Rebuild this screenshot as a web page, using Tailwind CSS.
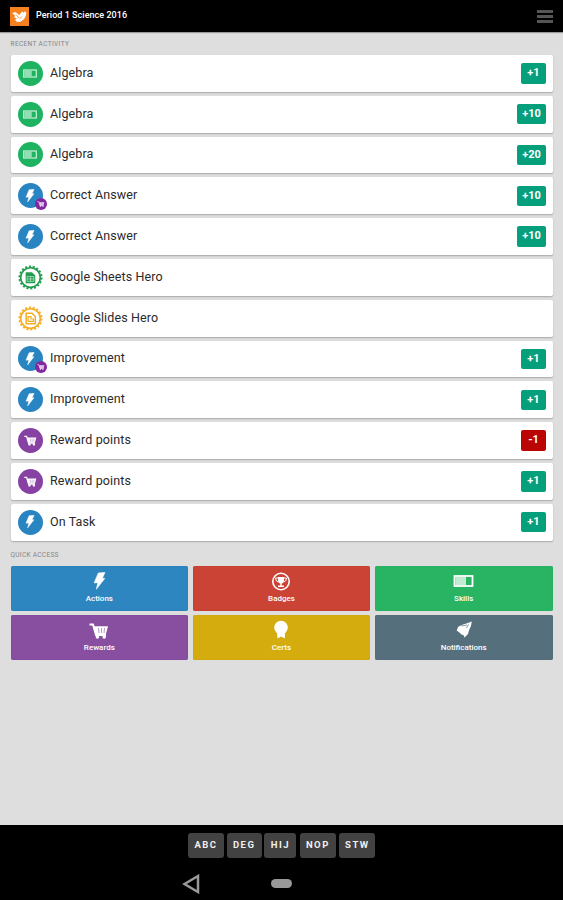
<!DOCTYPE html>
<html lang="en">
<head>
<meta charset="utf-8">
<title>Period 1 Science 2016</title>
<script src="https://cdn.jsdelivr.net/npm/@tailwindcss/browser@4"></script>
</head>
<body class="w-[563px] h-[900px] overflow-hidden bg-[#dedede] font-['Roboto',sans-serif] text-[#2a2a2a]">
<svg class="hidden">
  <symbol id="bolt" viewBox="0 0 12 18"><path fill="currentColor" stroke="currentColor" stroke-width=".6" d="M4.800 1 11.500.4 8.800 6.200 11.300 6.400 2.800 17.300 4.400 10.700.600 10.900Z"/></symbol>
  <symbol id="cart" viewBox="0 0 20 16"><path fill="none" stroke="currentColor" stroke-width="2" d="M.5 1.500H4L7 12h10"/><path fill="currentColor" d="M5 3.200h14L16.800 11.500H7.200Z"/><path stroke="#8a4a9f" stroke-width=".6" d="M9.500 5l.5 5M12.500 5v5M15.500 5l-.5 5"/><circle cx="8.400" cy="14" r="1.800" fill="currentColor"/><circle cx="15.200" cy="14" r="1.800" fill="currentColor"/></symbol>
  <symbol id="meter" viewBox="0 0 20 12"><rect x="1" y="1" width="18" height="10" fill="none" stroke="currentColor" stroke-width="1.800"/><rect x="2" y="2" width="10.500" height="8" fill="currentColor" opacity=".72"/></symbol>
  <symbol id="seal" viewBox="0 0 26 26"><circle cx="13" cy="13" r="10.200" fill="none" stroke="currentColor" stroke-width="1.700"/><circle cx="13" cy="13" r="11.600" fill="none" stroke="currentColor" stroke-width="1.800" stroke-dasharray="2.200 1.844"/></symbol>
</svg>
<div class="flex flex-col h-full">
  <header class="h-[32px] shrink-0 bg-black flex items-center pl-[10px] pr-[10px] shadow-[0_1px_1px_#999]">
    <svg class="w-[19px] h-[19px]" viewBox="0 0 19 19"><rect width="19" height="19" fill="#f5821f"/><path fill="#fff" d="M2.500 6.500Q3.500 4.500 6 5.500L9.300 8 12 4.500 13.500 5.700 15 4.300 16.500 6.300 15.500 9.500Q14.500 12.500 12 13.700 9 15.800 6.300 14.500L5 12.800 7 11.500 4 10.300 5.300 8.800Z"/><path stroke="#f5821f" stroke-width=".8" fill="none" d="M6 7.500 8.800 11M9.500 12l2.500-2.500"/></svg>
    <h1 class="ml-[7px] -mt-[2px] text-[9px] leading-[12px] font-medium text-white whitespace-nowrap tracking-[0.04px]">Period 1 Science 2016</h1>
    <div class="ml-auto flex flex-col gap-[2px] w-[16px] mr-[0.5px]"><i class="h-[3px] bg-[#555]"></i><i class="h-[3px] bg-[#555]"></i><i class="h-[3px] bg-[#555]"></i></div>
  </header>
  <main class="flex-1 px-[10.5px]">
    <h2 class="h-[23px] pt-[7px] text-[6.500px] leading-[10px] text-[#858585] tracking-[0.370px]">RECENT ACTIVITY</h2>
    <ul id="activity" class="flex flex-col gap-[4px]"></ul>
    <h2 class="h-[25.500px] pt-[9px] text-[6.500px] leading-[10px] text-[#858585] tracking-[0.320px]">QUICK ACCESS</h2>
    <div class="grid grid-cols-3 gap-[4.500px] text-white text-[8px] leading-[10px] font-medium text-center">
      <div class="h-[44.500px] rounded-[2px] bg-[#2e86c1] flex flex-col items-center shadow-[inset_0_0_1px_#1b6ca5]"><svg class="mt-[6px] w-[13px] h-[18px]"><use href="#bolt"/></svg><span class="mt-[3.500px]">Actions</span></div>
      <div class="h-[44.500px] rounded-[2px] bg-[#cb4335] flex flex-col items-center shadow-[inset_0_0_1px_#a82018]"><svg class="mt-[5.500px] w-[20px] h-[19px]" viewBox="0 0 20 19"><circle cx="10" cy="9.500" r="8.200" fill="none" stroke="#fff" stroke-width="1.600"/><path fill="#fff" d="M7 5h6v4q-.5 2.200-2.300 2.800v1.700H13V15H7v-1.500h2.300v-1.700Q7.500 11.200 7 9Z"/><path fill="none" stroke="#fff" d="M7 6H4.500q0 3.500 3 4M13 6h2.500q0 3.500-3 4"/></svg><span class="mt-[3px]">Badges</span></div>
      <div class="h-[44.500px] rounded-[2px] bg-[#28b463] flex flex-col items-center shadow-[inset_0_0_1px_#10944a]"><svg class="mt-[9px] w-[21px] h-[12px]"><use href="#meter"/></svg><span class="mt-[6.500px]">Skills</span></div>
      <div class="h-[44.500px] rounded-[2px] bg-[#884ea0] flex flex-col items-center shadow-[inset_0_0_1px_#6b2d88]"><svg class="mt-[8px] w-[20px] h-[16px]"><use href="#cart"/></svg><span class="mt-[3.500px]">Rewards</span></div>
      <div class="h-[44.500px] rounded-[2px] bg-[#d4ac0d] flex flex-col items-center shadow-[inset_0_0_1px_#b98e00]"><svg class="mt-[5px] w-[16px] h-[19px]" viewBox="0 0 16 19"><circle cx="8" cy="7.500" r="6.800" fill="#fff"/><path fill="#fff" d="M4 12h8l-.2 6.500L8 16.500 4.500 18.500Z"/></svg><span class="mt-[3.500px]">Certs</span></div>
      <div class="h-[44.500px] rounded-[2px] bg-[#566f7c] flex flex-col items-center shadow-[inset_0_0_1px_#3c5664]"><svg class="mt-[6px] w-[16px] h-[17px]" viewBox="0 0 16 17"><path fill="#fff" d="M15.800.5Q15.500 5 13.300 8.500L12 13 8.500 16.500 7.400 14Q5 14 4 12L.7 9.500 2.200 5.800 7 3.500Q11 2.500 15.800.5Z"/><path fill="none" stroke="#566f7c" stroke-width=".7" d="M5.500 5 11 4M12.500 3.500 10.500 7"/></svg><span class="mt-[4.500px]">Notifications</span></div>
    </div>
  </main>
  <footer class="h-[75px] shrink-0 bg-black flex flex-col">
    <div class="flex gap-[2.700px] pl-[188px] pt-[7.500px] text-[9.500px] font-bold text-[#f0f0f0] leading-[24px] text-center tracking-[1.500px]">
      <span class="w-[36px] h-[25.500px] bg-[#424242] rounded-[3px]">ABC</span>
      <span class="w-[35px] h-[25.500px] bg-[#424242] rounded-[3px]">DEG</span>
      <span class="w-[32px] h-[25.500px] bg-[#424242] rounded-[3px]">HIJ</span>
      <span class="w-[36px] h-[25.500px] bg-[#424242] rounded-[3px] ml-[0.800px]">NOP</span>
      <span class="w-[36px] h-[25.500px] bg-[#424242] rounded-[3px] ml-[0.800px]">STW</span>
    </div>
    <div class="flex items-center pl-[181.500px] mt-[15.500px]">
      <svg class="w-[18px] h-[20px]" viewBox="0 0 18 20"><path fill="none" stroke="#999" stroke-width="2.500" d="M2.500 10 16 2v16Z"/></svg>
      <i class="ml-[71px] w-[21.500px] h-[9px] rounded-full bg-[#999]"></i>
    </div>
  </footer>
</div>
<script>
const circle = (color, inner) => `<div class="relative w-[25px] h-[25px] rounded-full flex items-center justify-center text-white ${color}">${inner}</div>`;
const bolt = '<svg class="w-[10px] h-[13.500px]"><use href="#bolt"/></svg>';
const extra = '<span class="absolute left-[17px] top-[15px] w-[12px] h-[12px] rounded-full bg-[#8327a0] flex items-center justify-center text-[#efd8f5]"><svg class="w-[8px] h-[6px]"><use href="#cart"/></svg></span>';
const seal = (color, doc) => `<div class="relative w-[25px] h-[25px] ${color}"><svg viewBox="0 0 26 26" class="w-full h-full"><use href="#seal"/>${doc}</svg></div>`;
const icons = {
  skill: circle('bg-[#1db360]', '<svg class="w-[14px] h-[9px] text-[#bff0d2]"><use href="#meter"/></svg>'),
  action: circle('bg-[#2985c2]', bolt),
  both: circle('bg-[#2985c2]', bolt + extra),
  reward: circle('bg-[#8641a3]', '<svg class="w-[13px] h-[11px]"><use href="#cart"/></svg>'),
  sheets: seal('text-[#249c50]', '<path fill="currentColor" d="M8 7.500h6.500l3.500 3.500v8H8Z"/><path fill="none" stroke="#c8ead3" stroke-width=".7" d="M9.500 12h7v5h-7zM9.500 14.500h7M13 12v5"/>'),
  slides: seal('text-[#f4ae29]', '<path fill="none" stroke="currentColor" stroke-width="1.600" d="M8.500 7.500h6l3.500 3.500v7.500H8.500Z"/><path fill="none" stroke="currentColor" stroke-width="1.200" d="M10.500 11h3v2.500h2.500V16h-5.500z"/>')
};
const rows = [
  ['skill', 'Algebra', '+1'], ['skill', 'Algebra', '+10'], ['skill', 'Algebra', '+20'],
  ['both', 'Correct Answer', '+10'], ['action', 'Correct Answer', '+10'],
  ['sheets', 'Google Sheets Hero'], ['slides', 'Google Slides Hero'],
  ['both', 'Improvement', '+1'], ['action', 'Improvement', '+1'],
  ['reward', 'Reward points', '-1'], ['reward', 'Reward points', '+1'], ['action', 'On Task', '+1']
];
document.getElementById('activity').innerHTML = rows.map(([icon, name, points]) => `
  <li class="h-[36.800px] rounded-[2px] bg-white shadow-[0_1px_1.500px_#a9a9a9] flex items-center pl-[7px] pr-[6.500px]">
    ${icons[icon]}
    <span class="ml-[7.500px] text-[12.500px] leading-[16px] tracking-[0.120px] -mt-[1px]">${name}</span>
    ${points ? `<b class="ml-auto h-[20.500px] rounded-[2px] text-center text-white text-[11px] leading-[19px] font-bold ${points.length > 2 ? 'w-[29px]' : 'w-[25px]'} ${points[0] === '-' ? 'bg-[#b90504]' : 'bg-[#069f7c]'}">${points}</b>` : ''}
  </li>`).join('');
</script>
</body>
</html>
